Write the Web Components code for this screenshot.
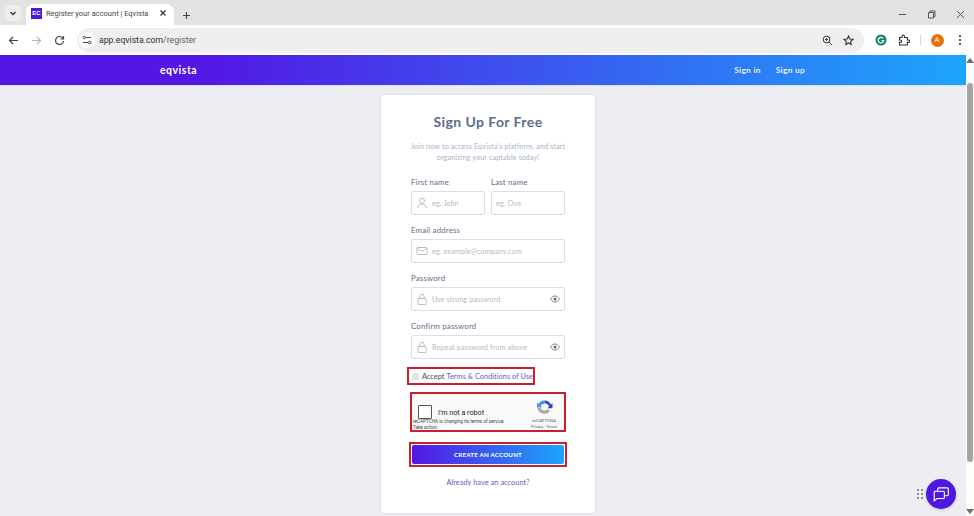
<!DOCTYPE html>
<html>
<head>
<meta charset="utf-8">
<title>Register your account | Eqvista</title>
<style>
  html, body { margin: 0; height: 516px; overflow: hidden; background: #edeef3; }
  body { display: flex; flex-direction: column; font-family: "Lato", "Noto Sans", sans-serif; }
</style>
</head>
<body>
<browser-chrome></browser-chrome>
<page-view>
  <site-nav></site-nav>
  <signup-card>
    <name-row>
      <form-field label="First name" placeholder="eg. John" icon="user"></form-field>
      <form-field label="Last name" placeholder="eg. Doe"></form-field>
    </name-row>
    <form-field label="Email address" placeholder="eg. example@company.com" icon="mail"></form-field>
    <form-field label="Password" placeholder="Use strong password" icon="lock" eye></form-field>
    <form-field label="Confirm password" placeholder="Repeat password from above" icon="lock" eye></form-field>
  </signup-card>
</page-view>
<chat-widget></chat-widget>

<script>
class BrowserChrome extends HTMLElement {
  constructor() {
    super();
    this.attachShadow({ mode: 'open' });
    this.shadowRoot.innerHTML = `
      <style>
        :host { display: block; flex: none; background: #fff; font-family: "Roboto", "Liberation Sans", sans-serif; color: #3c4043; }
        svg { display: block; }
        .tabs { height: 25px; background: #e3e3e3; display: flex; align-items: flex-end; position: relative; }
        .down { width: 16px; height: 16px; margin: 0 0 4px 5px; border-radius: 5px; background: #eeeeee; display: flex; align-items: center; justify-content: center; }
        .tab { width: 148px; height: 21px; margin-left: 5px; background: #fff; border-radius: 8px 8px 0 0; display: flex; align-items: center; font-size: 7.5px; box-sizing: border-box; padding: 0 0 3px 5px; }
        .fav { width: 11px; height: 11px; background: #4f17e0; color: #fff; font: bold 6px "Liberation Sans", sans-serif; display: flex; align-items: center; justify-content: center; margin-right: 4px; }
        .title { flex: 1; white-space: nowrap; color: #45474a; }
        .close { margin-right: 7px; }
        .plus { margin: 0 0 5px 8px; }
        .win { margin-left: auto; display: flex; gap: 20px; align-items: center; margin-bottom: 6px; padding-right: 9px; }
        .bar { height: 30px; display: flex; align-items: center; box-sizing: border-box; padding: 0 0 0 8px; }
        .nav { display: flex; gap: 12px; align-items: center; }
        .omni { margin-left: 12px; width: 787px; height: 25px; border-radius: 13px; background: #efefef; display: flex; align-items: center; font-size: 8.7px; box-sizing: border-box; padding: 0 10px 0 2px; }
        .tune { width: 16px; height: 16px; border-radius: 50%; background: #fff; display: flex; align-items: center; justify-content: center; margin-right: 4px; }
        .url { flex: 1; color: #5f6368; }
        .url b { font-weight: 400; color: #2f3134; }
        .omni-r { display: flex; gap: 10px; align-items: center; }
        .ext { margin-left: 11px; display: flex; align-items: center; }
        .sep { width: 1px; height: 10px; background: #d5d5d5; margin: 0 9.5px 0 10px; }
        .avatar { width: 13px; height: 13px; border-radius: 50%; background: #e8710a; color: #fff; font-size: 7px; display: flex; align-items: center; justify-content: center; }
      </style>
      <div class="tabs">
        <div class="down"><svg width="8" height="8" viewBox="0 0 8 8"><path d="M1.5 3l2.5 2.5L6.5 3" fill="none" stroke="#333" stroke-width="1.3"/></svg></div>
        <div class="tab">
          <span class="fav">EC</span>
          <span class="title">Register your account | Eqvista</span>
          <svg class="close" width="8" height="8" viewBox="0 0 8 8"><path d="M1.5 1.5l5 5M6.5 1.5l-5 5" stroke="#333" stroke-width="1.2"/></svg>
        </div>
        <svg class="plus" width="9" height="9" viewBox="0 0 9 9"><path d="M4.5 1v7M1 4.5h7" stroke="#444" stroke-width="1.1"/></svg>
        <div class="win">
          <svg width="9" height="9" viewBox="0 0 9 9"><path d="M1 4.5h7" stroke="#555" stroke-width="1"/></svg>
          <svg width="9" height="9" viewBox="0 0 9 9"><path d="M1.5 2.5h5v5.5h-5zM3 2.5V1h5v5.5H6.500" fill="none" stroke="#555" stroke-width="1"/></svg>
          <svg width="9" height="9" viewBox="0 0 9 9"><path d="M1 1l7 7M8 1l-7 7" stroke="#555" stroke-width="1"/></svg>
        </div>
      </div>
      <div class="bar">
        <div class="nav">
          <svg width="11" height="11" viewBox="0 0 11 11"><path d="M10 5.500H1.500M5 2L1.500 5.500 5 9" fill="none" stroke="#444" stroke-width="1.2"/></svg>
          <svg width="11" height="11" viewBox="0 0 11 11"><path d="M1 5.500h8.500M6 2l3.500 3.500L6 9" fill="none" stroke="#b4b4b4" stroke-width="1.2"/></svg>
          <svg width="11" height="11" viewBox="0 0 11 11"><path d="M9 3.500A4 4 0 1 0 9.500 6M9.500 1v3h-3" fill="none" stroke="#444" stroke-width="1.2"/></svg>
        </div>
        <div class="omni">
          <span class="tune"><svg width="10" height="10" viewBox="0 0 10 10"><path d="M4 2.500h5M1 7.500h5" stroke="#444" stroke-width="1"/><circle cx="2.300" cy="2.500" r="1.300" fill="none" stroke="#444"/><circle cx="7.700" cy="7.500" r="1.300" fill="none" stroke="#444"/></svg></span>
          <span class="url"><b>app.eqvista.com</b>/register</span>
          <span class="omni-r">
            <svg width="11" height="11" viewBox="0 0 11 11"><circle cx="4.500" cy="4.500" r="3.200" fill="none" stroke="#444" stroke-width="1.100"/><path d="M7 7l3.200 3.200M3 4.500h3M4.500 3v3" stroke="#444" stroke-width="1"/></svg>
            <svg width="11" height="11" viewBox="0 0 11 11"><path d="M5.500 1l1.300 3 3.200.3-2.400 2.100.7 3.100-2.800-1.600-2.800 1.600.7-3.100L1 4.300l3.200-.3z" fill="none" stroke="#333" stroke-width="1.100"/></svg>
          </span>
        </div>
        <div class="ext">
          <svg width="12" height="12" viewBox="0 0 12 12"><circle cx="6" cy="6" r="5.500" fill="#13846b"/><path d="M8.300 4.500A2.800 2.800 0 1 0 8.800 6.500H6.500" fill="none" stroke="#fff" stroke-width="1.200"/></svg>
          <svg style="margin-left:11px" width="12" height="12" viewBox="0 0 12 12"><path d="M1.500 3.500h2.500V2.300a1.200 1.200 0 0 1 2.400 0v1.200h3v2.500h1a1.200 1.200 0 0 1 0 2.400h-1v2.600H1.500V8.400h1a1.200 1.200 0 0 0 0-2.400h-1z" fill="none" stroke="#333" stroke-width="1.100"/></svg>
          <span class="sep"></span>
          <span class="avatar">A</span>
          <svg style="margin-left:14.500px" width="4" height="12" viewBox="0 0 4 12"><circle cx="2" cy="2" r="1.100" fill="#333"/><circle cx="2" cy="6" r="1.100" fill="#333"/><circle cx="2" cy="10" r="1.100" fill="#333"/></svg>
        </div>
      </div>`;
  }
}
customElements.define('browser-chrome', BrowserChrome);

class PageView extends HTMLElement {
  constructor() {
    super();
    this.attachShadow({ mode: 'open' });
    this.shadowRoot.innerHTML = `
      <style>
        :host { display: flex; flex: 1; min-height: 0; overflow: hidden; }
        .main { flex: 1; min-width: 0; display: flex; flex-direction: column; }
        .scroll { width: 8px; flex: none; background: #fdfdfd; display: flex; flex-direction: column; align-items: center; padding: 3px 0 2px; box-sizing: border-box; }
        .thumb { width: 6px; height: 379px; background: #a4a4a4; border-radius: 3px; margin-top: 20px; margin-bottom: auto; }
        .up { border: 4px solid transparent; border-top: 0; border-bottom: 5px solid #6f6f6f; }
        .dn { border: 4px solid transparent; border-bottom: 0; border-top: 5px solid #6f6f6f; }
      </style>
      <div class="main"><slot></slot></div>
      <div class="scroll"><i class="up"></i><i class="thumb"></i><i class="dn"></i></div>`;
  }
}
customElements.define('page-view', PageView);

class SiteNav extends HTMLElement {
  constructor() {
    super();
    this.attachShadow({ mode: 'open' });
    this.shadowRoot.innerHTML = `
      <style>
        :host { display: flex; flex: none; height: 30px; align-items: center; padding: 0 161px 0 160px; border-bottom: 1px solid #dfe0ea; color: #fff; background: linear-gradient(90deg, #5316e4 0%, #5316e4 20%, #1da5fc 100%); }
        .logo { font: 700 10.5px "Lato", sans-serif; letter-spacing: .5px; }
        .links { margin-left: auto; display: flex; gap: 15px; font: 700 8.3px "Lato", sans-serif; letter-spacing: .3px; color: #e6eeff; }
      </style>
      <span class="logo">eqvista</span>
      <span class="links"><span>Sign in</span><span>Sign up</span></span>`;
  }
}
customElements.define('site-nav', SiteNav);

class SignupCard extends HTMLElement {
  constructor() {
    super();
    this.attachShadow({ mode: 'open' });
    this.shadowRoot.innerHTML = `
      <style>
        :host { display: block; flex: none; width: 214px; height: 418px; margin: 9px 0 0 381px; box-sizing: border-box; padding: 18px 30px 0; background: #fff; border-radius: 2px; box-shadow: 0 0 3px rgba(60,70,110,.16); font-family: "Lato", "Noto Sans", sans-serif; }
        h1 { margin: 0; font-size: 14px; line-height: 18px; font-weight: 700; letter-spacing: .42px; text-align: center; color: #5a6c8d; }
        p { margin: 10px -4px 0; font-size: 7.2px; line-height: 11px; letter-spacing: .14px; text-align: center; color: #a9b2c6; }
        .fields { margin-top: 10px; display: block; }
        .terms { margin: 2px -4px 0; width: 128px; height: 18px; box-sizing: border-box; border: 2px solid #c8202f; display: flex; align-items: center; padding-left: 3px; font-size: 7.300px; letter-spacing: .06px; color: #3b4660; white-space: nowrap; }
        .box { width: 7px; height: 7px; border-radius: 1.500px; background: #e3e3e6; margin-right: 3px; }
        .terms a { color: #6a56cc; margin-left: 2px; }
        captcha-box { margin: 7px 0 0 -1px; }
        .submit { margin: 10px 0 0 -2px; width: 158px; height: 25px; box-sizing: border-box; border: 2px solid #c8202f; padding: 1px; background: #fff; }
        .submit div { height: 100%; border-radius: 2px; background: linear-gradient(90deg, #5316e4, #1da5fc); color: #fff; font-size: 6.200px; font-weight: 700; letter-spacing: .2px; display: flex; align-items: center; justify-content: center; }
        .have { margin-top: 11px; text-align: center; font-size: 7.300px; letter-spacing: .08px; color: #6a56cc; }
      </style>
      <h1>Sign Up For Free</h1>
      <p>Join now to access Eqvista's platform, and start<br>organizing your captable today!</p>
      <div class="fields"><slot></slot></div>
      <div class="terms"><span class="box"></span>Accept <a>Terms &amp; Conditions of Use</a></div>
      <captcha-box></captcha-box>
      <div class="submit"><div>CREATE AN ACCOUNT</div></div>
      <div class="have">Already have an account?</div>`;
  }
}
customElements.define('signup-card', SignupCard);

class NameRow extends HTMLElement {
  constructor() {
    super();
    this.attachShadow({ mode: 'open' });
    this.shadowRoot.innerHTML = `
      <style>:host { display: grid; grid-template-columns: 74px 74px; gap: 6px; }</style>
      <slot></slot>`;
  }
}
customElements.define('name-row', NameRow);

const FIELD_ICONS = {
  user: '<circle cx="6" cy="3.800" r="2.500"/><path d="M1.500 11c.4-2.700 2.200-4 4.500-4s4.100 1.300 4.500 4"/>',
  mail: '<rect x="1" y="2.500" width="10" height="7" rx="1"/><path d="M1.300 3.300L6 6.500l4.700-3.200"/>',
  lock: '<rect x="2" y="5.500" width="8" height="6" rx=".6"/><path d="M3.800 5.500V3.500a2.200 2.200 0 0 1 4.400 0v2"/>'
};

class FormField extends HTMLElement {
  constructor() {
    super();
    this.attachShadow({ mode: 'open' });
  }
  connectedCallback() {
    const icon = this.getAttribute('icon');
    const svg = icon ? `<svg width="12" height="12" viewBox="0 0 12 12" fill="none" stroke="#a6adbc" stroke-width=".8">${FIELD_ICONS[icon]}</svg>` : '';
    const eye = this.hasAttribute('eye') ? `<svg class="eye" width="10" height="8" viewBox="0 0 10 8"><path d="M.5 4C2 1.800 3.400 1 5 1s3 .8 4.500 3C8 6.200 6.600 7 5 7S2 6.200.5 4z" fill="none" stroke="#5d6676" stroke-width=".8"/><circle cx="5" cy="4" r="1.500" fill="#5d6676"/></svg>` : '';
    this.shadowRoot.innerHTML = `
      <style>
        :host { display: block; height: 48px; }
        label { display: block; height: 18px; font-size: 7.800px; line-height: 18px; letter-spacing: .2px; color: #5f6c85; }
        .input { height: 24px; box-sizing: border-box; border: 1px solid #dcdfe6; border-radius: 2px; display: flex; align-items: center; padding: 0 4px; gap: 4px; background: #fff; }
        span { flex: 1; font-size: 7.200px; letter-spacing: .14px; color: #b3bac8; white-space: nowrap; }
        svg { flex: none; }
      </style>
      <label>${this.getAttribute('label')}</label>
      <div class="input">${svg}<span>${this.getAttribute('placeholder')}</span>${eye}</div>`;
  }
}
customElements.define('form-field', FormField);

class CaptchaBox extends HTMLElement {
  constructor() {
    super();
    this.attachShadow({ mode: 'open' });
    this.shadowRoot.innerHTML = `
      <style>
        :host { display: block; position: relative; width: 156px; height: 40px; box-sizing: border-box; border: 2px solid #c8202f; background: #f9f9f9; font-family: "Roboto", "Liberation Sans", sans-serif; color: #222; overflow: hidden; }
        .check { position: absolute; left: 6px; top: 11px; width: 14px; height: 14px; box-sizing: border-box; border: 1.500px solid #555; border-radius: 1px; background: #fff; }
        .robot { position: absolute; left: 26px; top: 14px; font-size: 7.200px; line-height: 10px; }
        .notice { position: absolute; left: 1px; top: 25px; font-size: 4.650px; line-height: 5.500px; color: #444; white-space: nowrap; }
        .notice u { display: block; }
        .brand { position: absolute; right: 4px; top: 5px; width: 32px; text-align: center; font-size: 4.400px; line-height: 6px; color: #555; }
        .brand svg { display: block; margin: 0 auto 2px; }
        .small { font-size: 3.800px; }
      </style>
      <div class="check"></div>
      <div class="robot">I'm not a robot</div>
      <div class="notice">reCAPTCHA is changing its terms of service.<u>Take action.</u></div>
      <div class="brand">
        <svg width="17" height="17" viewBox="0 0 17 17"><path d="M8.500 1.500a7 7 0 0 1 6.300 4l1.700-1.300v5h-5l1.500-1.500a4.500 4.500 0 0 0-4.500-3.500z" fill="#2a4ab8"/><path d="M8.500 1.500a7 7 0 0 0-6 3.400L1 3.500v5h5L4.500 7A4.500 4.500 0 0 1 8.500 4.700z" fill="#4a90e8"/><path d="M1.500 9a7 7 0 0 0 12.500 3l-2.600-1.800A4.300 4.300 0 0 1 4.500 9z" fill="#a9a9a9"/></svg>
        <div>reCAPTCHA</div>
        <div class="small">Privacy - Terms</div>
      </div>`;
  }
}
customElements.define('captcha-box', CaptchaBox);

class ChatWidget extends HTMLElement {
  constructor() {
    super();
    this.attachShadow({ mode: 'open' });
    this.shadowRoot.innerHTML = `
      <style>
        :host { position: absolute; right: 18px; bottom: 7px; display: flex; align-items: center; gap: 3px; }
        .grip { display: grid; grid-template-columns: 2px 2px; gap: 2px 2px; }
        .grip i { width: 2px; height: 2px; background: #8a8f9a; }
        .btn { width: 30px; height: 30px; border-radius: 50%; background: #4f17e0; display: flex; align-items: center; justify-content: center; box-shadow: 0 1px 3px rgba(0,0,0,.2); }
      </style>
      <div class="grip"><i></i><i></i><i></i><i></i><i></i><i></i></div>
      <div class="btn"><svg width="18" height="18" viewBox="0 0 16 16" fill="none" stroke="#fff" stroke-width="1"><path d="M2 6.500a1 1 0 0 1 1-1h7a1 1 0 0 1 1 1v4.500a1 1 0 0 1-1 1H4.500L2 14z"/><path d="M5 5.500V3.500a1 1 0 0 1 1-1h7.500a1 1 0 0 1 1 1v5a1 1 0 0 1-1 1H11"/></svg></div>`;
  }
}
customElements.define('chat-widget', ChatWidget);
</script>
</body>
</html>
